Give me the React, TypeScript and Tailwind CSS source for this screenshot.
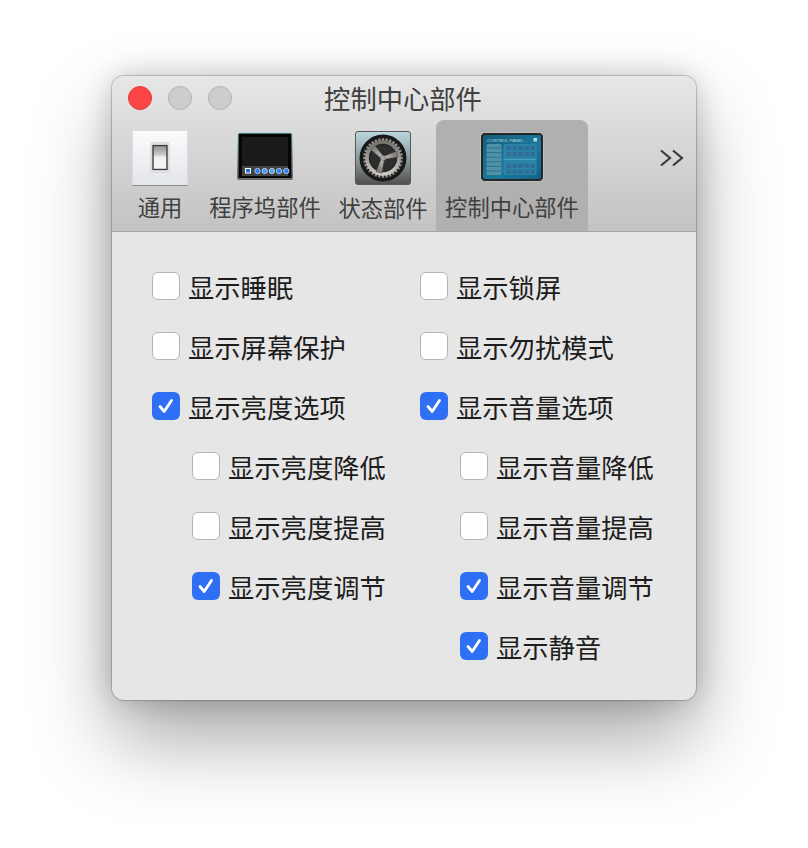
const cjk = "font-['PingFang_SC','Noto_Sans_CJK_SC','Noto_Sans',sans-serif]";

const SwitchIcon = () => (
  <svg width="56" height="56" viewBox="0 0 56 56">
    <defs>
      <linearGradient id="swBg" x1="0" y1="0" x2="0" y2="1">
        <stop offset="0" stopColor="#fbfbfd" />
        <stop offset="1" stopColor="#e2e5ea" />
      </linearGradient>
      <linearGradient id="swKnob" x1="0" y1="0" x2="0" y2="1">
        <stop offset="0" stopColor="#8f8f8f" />
        <stop offset="0.35" stopColor="#c4c4c4" />
        <stop offset="0.5" stopColor="#f0f0f0" />
        <stop offset="1" stopColor="#f4f4f4" />
      </linearGradient>
    </defs>
    <rect x="0.5" y="0.5" width="55" height="55" rx="1" fill="url(#swBg)" stroke="#dcdcdc" />
    <rect x="0" y="55" width="56" height="1" fill="#8d8d8d" />
    <rect x="19" y="13" width="18" height="29" rx="1.5" fill="#f7f7f7" stroke="#c8c8c8" />
    <rect x="21" y="15.5" width="14" height="24" fill="url(#swKnob)" stroke="#3a3a3a" strokeWidth="1.4" />
  </svg>
);

const dockColors = ["#2f80e8", "#4d97ee", "#5aa2f0", "#2f80e8", "#2f80e8"];

const DockIcon = () => (
  <svg width="56" height="48" viewBox="0 0 56 48">
    <defs>
      <linearGradient id="dockBg" x1="0" y1="0" x2="0" y2="1">
        <stop offset="0" stopColor="#b6dbe4" />
        <stop offset="1" stopColor="#6a6a6a" />
      </linearGradient>
    </defs>
    <rect x="0" y="0" width="56" height="48" rx="2.5" fill="url(#dockBg)" />
    <rect x="1.5" y="1.5" width="53" height="44.5" rx="1" fill="#060606" />
    <rect x="5" y="5" width="46" height="29" fill="#1b1b1b" />
    <rect x="5" y="34" width="46" height="10" fill="#414244" />
    <rect x="8" y="36" width="6" height="5.5" fill="#fff" />
    <rect x="9" y="37" width="4" height="3.5" fill="#1c6fd6" />
    {dockColors.map((c, i) => (
      <circle key={i} cx={20.5 + i * 7.2} cy="39" r="2.7" fill={c} stroke="#d5e6f8" strokeWidth="0.7" />
    ))}
  </svg>
);

const teeth = Array.from({ length: 32 }, (_, i) => (i * 360) / 32);

const GearIcon = () => (
  <svg width="56" height="54" viewBox="0 0 56 54">
    <defs>
      <linearGradient id="gearBg" x1="0" y1="0" x2="0" y2="1">
        <stop offset="0" stopColor="#b9d8df" />
        <stop offset="0.55" stopColor="#8a9698" />
        <stop offset="1" stopColor="#4f4f4f" />
      </linearGradient>
      <linearGradient id="gearMetal" x1="0" y1="0" x2="0" y2="1">
        <stop offset="0" stopColor="#76726f" />
        <stop offset="1" stopColor="#cbc7c2" />
      </linearGradient>
    </defs>
    <rect x="0.5" y="0.5" width="55" height="53" rx="2.5" fill="url(#gearBg)" stroke="#565656" />
    <circle cx="28" cy="27" r="23.5" fill="#181818" />
    {teeth.map((a) => (
      <rect key={a} x="26.8" y="7" width="2.4" height="5" fill="url(#gearMetal)" transform={`rotate(${a} 28 27)`} />
    ))}
    <circle cx="28" cy="27" r="16" fill="#303030" stroke="url(#gearMetal)" strokeWidth="3.6" />
    <circle cx="28" cy="27" r="13.4" fill="#2e2e2e" stroke="#1c1c1c" strokeWidth="0.8" />
    {[75, 195, 315].map((a) => (
      <path key={a} d="M26.6 27 L25 12 L31 12 L29.4 27 Z" fill="url(#gearMetal)" stroke="#4a4a4a" strokeWidth="0.4" transform={`rotate(${a} 28 27)`} />
    ))}
    <circle cx="28" cy="27" r="2.6" fill="#a9a6a2" stroke="#6a6a6a" strokeWidth="0.5" />
  </svg>
);

const PanelIcon = () => (
  <svg width="64" height="50" viewBox="0 0 64 50">
    <defs>
      <linearGradient id="panelBg" x1="0" y1="0" x2="1" y2="1">
        <stop offset="0" stopColor="#145d78" />
        <stop offset="0.6" stopColor="#1b7a9c" />
        <stop offset="1" stopColor="#0f6088" />
      </linearGradient>
    </defs>
    <rect x="0.5" y="0.5" width="63" height="49" rx="4.5" fill="#262626" stroke="#c0c0c0" />
    <rect x="3" y="3" width="58" height="44" rx="2" fill="url(#panelBg)" />
    <text x="7" y="9.5" fontSize="4.4" fill="#b9d8e2" fontFamily="Liberation Sans, sans-serif">CONTROL PANEL</text>
    <rect x="53.5" y="6" width="3.5" height="3.5" fill="#b9d8e2" />
    <rect x="6.5" y="12" width="15" height="31" rx="1.5" fill="#4f93aa" />
    {[0, 1, 2, 3, 4, 5].map((r) => (
      <rect key={r} x="6.5" y={15.5 + r * 4.6} width="15" height="1" fill="#2f7188" />
    ))}
    <rect x="23.5" y="12" width="33" height="31" rx="1" fill="#2a84a8" />
    {[0, 1, 3, 4].map((r) =>
      [0, 1, 2, 3, 4].map((c) => (
        <rect key={`${r}-${c}`} x={26.5 + c * 6} y={14 + r * 6 + (r > 1 ? -0.5 : 0)} width="4.5" height="4.5" fill="#2f6d97" />
      ))
    )}
    <rect x="23.5" y="27" width="33" height="0.7" fill="#62aec4" />
  </svg>
);

const tabs = [
  { label: "通用", icon: <SwitchIcon />, cls: "w-[62px] mr-[9px]", top: "pt-[10px]", gap: "mt-[5px]" },
  { label: "程序坞部件", icon: <DockIcon />, cls: "w-[130px]", top: "pt-[12px]", gap: "mt-[11px]" },
  { label: "状态部件", icon: <GearIcon />, cls: "w-[106px]", top: "pt-[11px]", gap: "mt-[7px]" },
  { label: "控制中心部件", icon: <PanelIcon />, cls: "w-[152px] bg-[#b0b0b0] rounded-t-[8px]", top: "pt-[12px]", gap: "mt-[9px]" },
];

const Check = ({ label, checked }: { label: string; checked?: boolean }) => (
  <div className="flex items-center h-[28px]">
    <div
      className={
        checked
          ? "w-[28px] h-[28px] rounded-[6px] bg-[#2f6ff3] flex items-center justify-center shrink-0"
          : "w-[28px] h-[28px] rounded-[6px] bg-white border border-[#b5b5b5] shrink-0"
      }
    >
      {checked && (
        <svg width="20" height="20" viewBox="0 0 20 20">
          <path d="M4 10.5 L8.2 15.5 L15.5 4.5" fill="none" stroke="#fff" strokeWidth="2.8" strokeLinecap="round" strokeLinejoin="round" />
        </svg>
      )}
    </div>
    <span className="ml-[8px] pt-[2px] text-[26.3px] leading-[28px] text-[#1d1d1d] whitespace-nowrap">{label}</span>
  </div>
);

const leftCol = [
  { label: "显示睡眠" },
  { label: "显示屏幕保护" },
  { label: "显示亮度选项", checked: true },
  { label: "显示亮度降低", sub: true },
  { label: "显示亮度提高", sub: true },
  { label: "显示亮度调节", checked: true, sub: true },
];

const rightCol = [
  { label: "显示锁屏" },
  { label: "显示勿扰模式" },
  { label: "显示音量选项", checked: true },
  { label: "显示音量降低", sub: true },
  { label: "显示音量提高", sub: true },
  { label: "显示音量调节", checked: true, sub: true },
  { label: "显示静音", checked: true, sub: true },
];

const Column = ({ items }: { items: { label: string; checked?: boolean; sub?: boolean }[] }) => (
  <div className="w-[268px] flex flex-col gap-[32px]">
    {items.map((it) => (
      <div key={it.label} className={it.sub ? "pl-[40px]" : ""}>
        <Check label={it.label} checked={it.checked} />
      </div>
    ))}
  </div>
);

export default function App() {
  return (
    <div className={`w-[808px] h-[848px] bg-white overflow-hidden pt-[76px] pl-[112px] ${cjk}`}>
      <div className="w-[584px] h-[624px] rounded-[12px] bg-[#e6e6e6] overflow-hidden flex flex-col shadow-[0_40px_80px_rgba(0,0,0,0.34),0_0_30px_rgba(0,0,0,0.2),0_0_1px_1px_rgba(0,0,0,0.2)]">
        <div className="h-[156px] shrink-0 flex flex-col bg-gradient-to-b from-[#e7e7e7] to-[#c3c3c3] border-b border-[#a6a6a6]">
          <div className="h-[44px] relative flex items-center justify-center">
            <div className="absolute left-[16px] top-[10px] flex gap-[16px]">
              <div className="w-[24px] h-[24px] rounded-full bg-[#fc4545] border border-[#e53a3a]" />
              <div className="w-[24px] h-[24px] rounded-full bg-[#cdcdcd] border border-[#b3b3b3]" />
              <div className="w-[24px] h-[24px] rounded-full bg-[#cdcdcd] border border-[#b3b3b3]" />
            </div>
            <span className="text-[26.3px] leading-[44px] text-[#404040] -ml-[2px]">控制中心部件</span>
          </div>
          <div className="flex-1 flex pl-[17px] relative">
            {tabs.map((t) => (
              <div key={t.label} className={`${t.cls} ${t.top} flex flex-col items-center`}>
                <div className="shrink-0">{t.icon}</div>
                <span className={`${t.gap} text-[22.3px] leading-[30px] text-[#404040] whitespace-nowrap`}>{t.label}</span>
              </div>
            ))}
            <svg className="absolute left-[547px] top-[29px]" width="26" height="18" viewBox="0 0 26 18">
              <path d="M2 1.5 L11 9 L2 16.5 M14 1.5 L23 9 L14 16.5" fill="none" stroke="#3a3a3a" strokeWidth="2.2" />
            </svg>
          </div>
        </div>
        <div className="flex pl-[40px] pt-[40px]">
          <Column items={leftCol} />
          <Column items={rightCol} />
        </div>
      </div>
    </div>
  );
}
